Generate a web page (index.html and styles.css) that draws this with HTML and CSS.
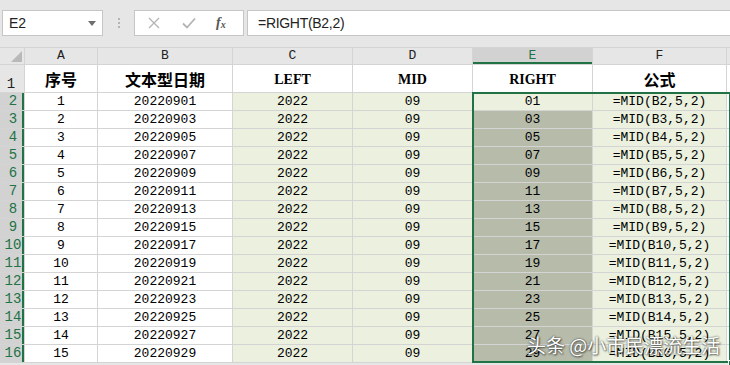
FILE: index.html
```html
<!DOCTYPE html>
<html lang="zh-CN">
<head>
    <meta charset="UTF-8">
    <title>RIGHT</title>
    <link rel="stylesheet" href="styles.css">
</head>
<body>
    <div class="toolbar">
        <div class="name-box">
            <span>E2</span>
            <svg class="arrow" width="8" height="5" viewBox="0 0 8 5"><path d="M0 0h8L4 5z" fill="#6e6e6e"/></svg>
        </div>
        <div class="grip"><i></i><i></i><i></i></div>
        <div class="fx-buttons">
            <svg width="12" height="12" viewBox="0 0 12 12"><path d="M1 1l10 10M11 1L1 11" stroke="#b4b4b4" stroke-width="1.3" fill="none"/></svg>
            <svg width="14" height="12" viewBox="0 0 14 12"><path d="M1 6.5l4 4L13 1.5" stroke="#b4b4b4" stroke-width="1.8" fill="none"/></svg>
            <span class="fx">f<sub>x</sub></span>
        </div>
        <div class="formula">=RIGHT(B2,2)</div>
    </div>

    <div class="sheet">
        <div class="corner"></div>
        <div class="col-head">A</div>
        <div class="col-head">B</div>
        <div class="col-head">C</div>
        <div class="col-head">D</div>
        <div class="col-head active">E</div>
        <div class="col-head">F</div>
        <div class="col-head"></div>

        <div class="row-head first">1</div>
        <div class="cell title cjk">序号</div>
        <div class="cell title cjk">文本型日期</div>
        <div class="cell title">LEFT</div>
        <div class="cell title">MID</div>
        <div class="cell title">RIGHT</div>
        <div class="cell title cjk">公式</div>
        <div class="cell"></div>

        <div class="row-head">2</div><div class="cell">1</div><div class="cell">20220901</div><div class="cell fill">2022</div><div class="cell fill">09</div><div class="cell fill">01</div><div class="cell fill">=MID(B2,5,2)</div><div class="cell"></div>
        <div class="row-head">3</div><div class="cell">2</div><div class="cell">20220903</div><div class="cell fill">2022</div><div class="cell fill">09</div><div class="cell sel">03</div><div class="cell fill">=MID(B3,5,2)</div><div class="cell"></div>
        <div class="row-head">4</div><div class="cell">3</div><div class="cell">20220905</div><div class="cell fill">2022</div><div class="cell fill">09</div><div class="cell sel">05</div><div class="cell fill">=MID(B4,5,2)</div><div class="cell"></div>
        <div class="row-head">5</div><div class="cell">4</div><div class="cell">20220907</div><div class="cell fill">2022</div><div class="cell fill">09</div><div class="cell sel">07</div><div class="cell fill">=MID(B5,5,2)</div><div class="cell"></div>
        <div class="row-head">6</div><div class="cell">5</div><div class="cell">20220909</div><div class="cell fill">2022</div><div class="cell fill">09</div><div class="cell sel">09</div><div class="cell fill">=MID(B6,5,2)</div><div class="cell"></div>
        <div class="row-head">7</div><div class="cell">6</div><div class="cell">20220911</div><div class="cell fill">2022</div><div class="cell fill">09</div><div class="cell sel">11</div><div class="cell fill">=MID(B7,5,2)</div><div class="cell"></div>
        <div class="row-head">8</div><div class="cell">7</div><div class="cell">20220913</div><div class="cell fill">2022</div><div class="cell fill">09</div><div class="cell sel">13</div><div class="cell fill">=MID(B8,5,2)</div><div class="cell"></div>
        <div class="row-head">9</div><div class="cell">8</div><div class="cell">20220915</div><div class="cell fill">2022</div><div class="cell fill">09</div><div class="cell sel">15</div><div class="cell fill">=MID(B9,5,2)</div><div class="cell"></div>
        <div class="row-head">10</div><div class="cell">9</div><div class="cell">20220917</div><div class="cell fill">2022</div><div class="cell fill">09</div><div class="cell sel">17</div><div class="cell fill">=MID(B10,5,2)</div><div class="cell"></div>
        <div class="row-head">11</div><div class="cell">10</div><div class="cell">20220919</div><div class="cell fill">2022</div><div class="cell fill">09</div><div class="cell sel">19</div><div class="cell fill">=MID(B11,5,2)</div><div class="cell"></div>
        <div class="row-head">12</div><div class="cell">11</div><div class="cell">20220921</div><div class="cell fill">2022</div><div class="cell fill">09</div><div class="cell sel">21</div><div class="cell fill">=MID(B12,5,2)</div><div class="cell"></div>
        <div class="row-head">13</div><div class="cell">12</div><div class="cell">20220923</div><div class="cell fill">2022</div><div class="cell fill">09</div><div class="cell sel">23</div><div class="cell fill">=MID(B13,5,2)</div><div class="cell"></div>
        <div class="row-head">14</div><div class="cell">13</div><div class="cell">20220925</div><div class="cell fill">2022</div><div class="cell fill">09</div><div class="cell sel">25</div><div class="cell fill">=MID(B14,5,2)</div><div class="cell"></div>
        <div class="row-head">15</div><div class="cell">14</div><div class="cell">20220927</div><div class="cell fill">2022</div><div class="cell fill">09</div><div class="cell sel">27</div><div class="cell fill">=MID(B15,5,2)</div><div class="cell"></div>
        <div class="row-head">16</div><div class="cell">15</div><div class="cell">20220929</div><div class="cell fill">2022</div><div class="cell fill">09</div><div class="cell sel">29</div><div class="cell fill">=MID(B16,5,2)</div><div class="cell"></div>

        <div class="selection"><span class="handle"></span></div>
    </div>

    <div class="watermark">头条 @小市民漂流生活</div>
</body>
</html>
```

FILE: styles.css
```css
* {
    margin: 0;
    padding: 0;
    box-sizing: border-box;
}

body {
    width: 730px;
    height: 365px;
    overflow: hidden;
    background: #e6e6e6;
    font-family: "Liberation Mono", "Noto Sans CJK SC", monospace;
    color: #000;
    position: relative;
}

/* formula bar */
.toolbar {
    height: 48px;
    padding: 10px 0 11px 2px;
    display: flex;
    align-items: stretch;
    border-bottom: 1px solid #d4d4d4;
}

.name-box {
    width: 101px;
    background: #fff;
    border: 1px solid #c6c6c6;
    display: flex;
    align-items: center;
    justify-content: space-between;
    padding: 0 6px 0 6px;
    font-family: "Liberation Sans", sans-serif;
    font-size: 14px;
    color: #222;
}

.name-box .arrow {
    margin-top: 1px;
}

.grip {
    width: 31px;
    display: flex;
    flex-direction: column;
    align-items: center;
    justify-content: center;
    gap: 2px;
}

.grip i {
    width: 2px;
    height: 2px;
    background: #b4b4b4;
}

.fx-buttons {
    width: 110px;
    background: #fff;
    border: 1px solid #c6c6c6;
    display: flex;
    align-items: center;
    padding: 0 0 0 13px;
    gap: 22px;
}

.fx {
    font-family: "Liberation Serif", serif;
    font-style: italic;
    font-weight: bold;
    font-size: 14px;
    color: #555;
    margin-left: -2px;
}

.fx sub {
    font-size: 10px;
    vertical-align: -1px;
}

.formula {
    flex: 1;
    margin-left: 3px;
    background: #fff;
    border: 1px solid #c6c6c6;
    border-right: none;
    display: flex;
    align-items: center;
    padding-left: 10px;
    font-family: "Liberation Sans", sans-serif;
    font-size: 14px;
    letter-spacing: -0.3px;
    color: #222;
}

/* grid */
.sheet {
    display: grid;
    grid-template-columns: 24px 72px 134px 119px 119px 119px 133px 1fr;
    grid-template-rows: 16px 27px repeat(15, 17px);
    gap: 1px;
    background: #d4d4d4;
    padding-bottom: 1px;
    font-size: 13px;
    position: relative;
}

.corner {
    background: #e6e6e6;
    position: relative;
}

.corner::after {
    content: '';
    position: absolute;
    right: 2px;
    bottom: 2px;
    border-left: 11px solid transparent;
    border-bottom: 11px solid #b9b9b9;
}

.col-head {
    background: #e6e6e6;
    text-align: center;
    line-height: 16px;
    font-size: 13px;
    color: #222;
}

.col-head.active {
    background: #d2d2d2;
    color: #217346;
    box-shadow: inset 0 -2px 0 #217346;
}

.row-head {
    background: #d2d2d2;
    color: #217346;
    font-size: 14px;
    line-height: 17px;
    padding-left: 2px;
    text-align: center;
    box-shadow: inset -2px 0 0 #217346;
}

.row-head.first {
    background: #e6e6e6;
    color: #222;
    box-shadow: none;
    display: flex;
    align-items: flex-end;
    justify-content: center;
    padding: 0 2px 0 0;
    line-height: 15px;
}

.cell {
    background: #fff;
    text-align: center;
    line-height: 17px;
    white-space: nowrap;
    overflow: hidden;
}

.cell.fill {
    background: #ebf1de;
}

.cell.sel {
    background: #b6bbaa;
}

.cell.title {
    font-family: "Liberation Serif", serif;
    font-weight: bold;
    font-size: 14px;
    line-height: 27px;
    padding-top: 1px;
}

.cell.title.cjk {
    font-family: "Noto Sans CJK SC", sans-serif;
    font-size: 16px;
}

/* overlay on E2:E16, kept out of auto-placement */
.selection {
    position: absolute;
    grid-column: 6;
    grid-row: 3 / 18;
    top: -1px;
    left: -1px;
    right: -1px;
    bottom: -1px;
    border: 2px solid #217346;
    z-index: 1;
}

.handle {
    position: absolute;
    right: -5px;
    bottom: -5px;
    width: 6px;
    height: 6px;
    background: #217346;
    border: 1px solid #fff;
}

.watermark {
    position: absolute;
    left: 527px;
    top: 331px;
    font-family: "Noto Sans CJK SC", sans-serif;
    font-size: 19px;
    color: #fff;
    white-space: nowrap;
    z-index: 2;
    text-shadow: 0 0 2px rgba(0, 0, 0, 0.75), 1px 1px 2px rgba(0, 0, 0, 0.5);
}
```
